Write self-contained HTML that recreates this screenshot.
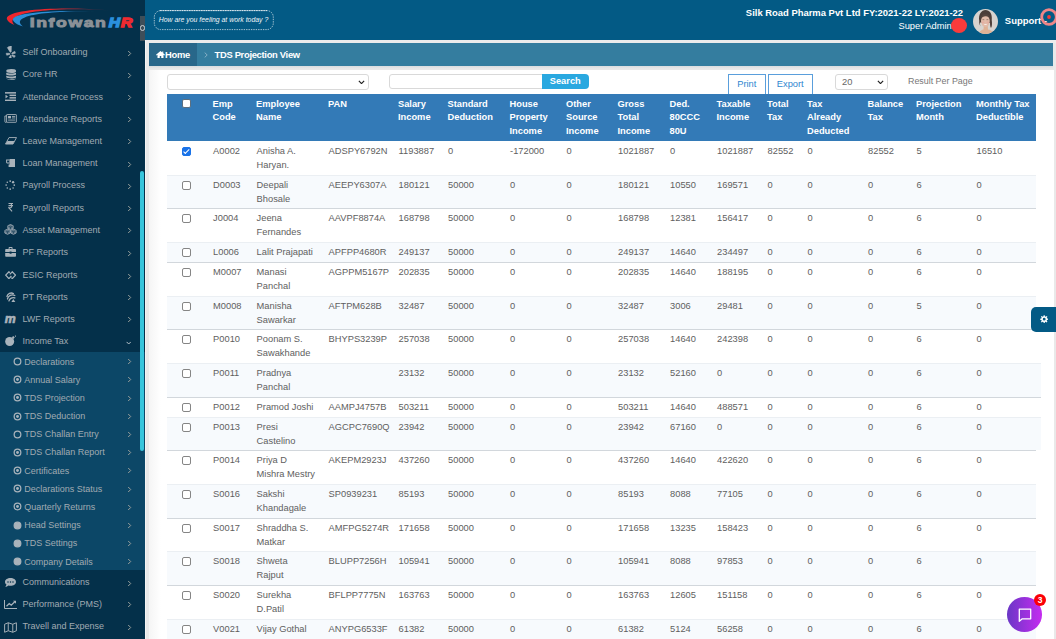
<!DOCTYPE html>
<html lang="en"><head><meta charset="utf-8"><title>TDS Projection View</title>
<style>
*{box-sizing:border-box;margin:0;padding:0}
html,body{width:1056px;height:639px;overflow:hidden}
body{font-family:"Liberation Sans",sans-serif;background:#e9e9e9;position:relative;font-size:9.3px;color:#555}
#side{position:absolute;left:0;top:0;width:145px;height:639px;background:#04304a;overflow:hidden}
#sub{position:absolute;left:0;top:352px;width:145px;height:218px;background:#0c4767}
#sbar{position:absolute;left:140px;top:171px;width:4px;height:280px;background:#37c5dc;border-radius:2px}
.mt,.st{position:absolute;color:#a1abb2;font-size:9px;line-height:12px;white-space:nowrap}
.mt{left:22.4px}
.st{left:24.2px}
.ch{position:absolute;left:127px;width:5px;height:7px}
.b{position:absolute;left:13px;width:9px;height:9px}
#top{position:absolute;left:145px;top:0;width:911px;height:40px;background:#035a85}
#topline{position:absolute;left:145px;top:40px;width:911px;height:3px;background:#ececec}
#shade{position:absolute;left:145px;top:40px;width:1.2px;height:599px;background:#f4f4f4}
#card{position:absolute;left:149px;top:70px;width:905px;height:569px;background:linear-gradient(90deg,#f5f5f5,#fff 12px)}
#bc{position:absolute;left:149px;top:43px;width:904px;height:23px;background:#347d9f}
#bchome{position:absolute;left:149px;top:43px;width:48px;height:23px;background:#28678a}
.bct{position:absolute;color:#fff;font-weight:bold;font-size:9.4px;letter-spacing:-.3px;line-height:23px;top:43px;white-space:nowrap}
#pill{position:absolute;left:153px;top:10px;width:121px;height:19.5px;color:#f0f4f7;font-style:italic;font-size:6.9px;line-height:19.5px;text-align:center;white-space:nowrap}
#ttl{position:absolute;right:93px;top:6.5px;color:#fff;font-weight:bold;font-size:9.43px;line-height:12px;white-space:nowrap}
#sadm{position:absolute;left:898.5px;top:20px;color:#fff;font-size:9.3px;line-height:12px;white-space:nowrap}
#reddot{position:absolute;left:950.5px;top:18px;width:16px;height:15px;border-radius:50%;background:#fa3b3b}
#av{position:absolute;left:973px;top:9px;width:25px;height:25px}
#supp{position:absolute;left:1004.8px;top:14.7px;color:#fff;font-weight:bold;font-size:9.5px;line-height:12px;white-space:nowrap}
#ring{position:absolute;left:1039px;top:7px;width:20px;height:20px}
.inp{position:absolute;background:#fff;border:1px solid #d9d9d9;border-radius:3px}
.cv{position:absolute;width:7px;height:4.5px}
#sbtn{position:absolute;left:542px;top:74px;width:46.5px;height:15px;background:#29a8e0;color:#fff;font-weight:bold;font-size:9.3px;line-height:15px;text-align:center;border-radius:0 4px 4px 0}
.obtn{position:absolute;top:74px;height:22px;border:1px solid #5a9fdc;background:#fff;color:#2f86cf;font-size:9.3px;line-height:18px;text-align:center}
.thead{position:absolute;background:#337ab7}
.th{position:absolute;top:3.5px;color:#fff;font-size:9.3px;line-height:13.5px;white-space:nowrap;font-weight:bold}
.tr{position:absolute;background:#fff;border-top:1px solid #d2d7dc}
.tr.alt{background:#f7fafd;border-top-color:#ebeff3}
.tr.first{border-top-color:#fff}
.td{position:absolute;top:3.3px;color:#606060;font-size:9.3px;line-height:13.67px;white-space:nowrap}
.cb{position:absolute;width:8.8px;height:8.8px;background:#fff;border:1px solid #858585;border-radius:2px}
.thead .cb{border-color:#5c6f80}
.cb.on{background:#1a73e8;border-color:#1a73e8}
.cb.on:after{content:"";position:absolute;left:2px;top:0.2px;width:2.2px;height:4.6px;border:solid #fff;border-width:0 1.2px 1.2px 0;transform:rotate(45deg)}
#gear{position:absolute;left:1031px;top:307px;width:25px;height:25px;background:#035a85;border-radius:5px 0 0 5px}
#gear svg{position:absolute;left:8.8px;top:7.8px;width:8.4px;height:8.4px}
#chatb{position:absolute;left:1007px;top:597.3px;width:34.7px;height:34.7px;border-radius:50%;background:linear-gradient(90deg,#6a37c6,#c52cf0)}
#chatb svg{position:absolute;left:9.5px;top:9.6px;width:16px;height:16px}
#badge{position:absolute;left:1034px;top:593.5px;width:12.3px;height:12.3px;border-radius:50%;background:#fb0007;color:#fff;font-weight:bold;font-size:8.5px;line-height:12.3px;text-align:center}
#bcsh{position:absolute;left:149px;top:66px;width:904px;height:4px;background:linear-gradient(180deg,#d9dcdf,#e9e9e9 70%)}

</style></head>
<body>
<div id="side">
<div id="sub"></div>
<svg style="position:absolute;left:5.4px;top:45.8px;width:10.4px;height:12.4px" viewBox="0 0 20 24"><g fill="#a9b3bb" stroke="#a9b3bb" stroke-width="1.100" stroke-linejoin="round"><path d="M8.200 0.800C9.500 0.300 11 0 12.300 0.200L12 10.800C11.900 12.300 10.300 12.600 9.600 11.400L4.500 3.200C5.500 2.100 6.800 1.300 8.200 0.800Z"/><path d="M13.800 13.300L18.800 10.200C19.600 11.300 20 12.600 20 14L14.200 15.600C12.900 15.900 12.700 14 13.800 13.300Z"/><path d="M14.300 17.200L19.800 19C19.500 20.400 18.700 21.600 17.700 22.500L13.300 18.800C12.400 17.900 13.200 16.800 14.300 17.200Z"/><path d="M11.800 19.300L12 24C10.500 24.200 9 23.900 7.700 23.300L10 18.800C10.600 17.700 11.800 18.100 11.800 19.300Z"/><path d="M9 16.300L3.300 18C2.600 16.800 2.200 15.400 2.300 14L8.500 14.200C9.900 14.300 10.200 15.900 9 16.300Z"/></g></svg><div class="mt" style="top:46.0px">Self Onboarding</div><svg class="ch" style="top:49.5px" viewBox="0 0 5 7"><path d="M1.200 1L3.700 3.500L1.200 6" fill="none" stroke="#99a09d" stroke-width="1"/></svg>
<svg style="position:absolute;left:5.6px;top:68.7px;width:10.4px;height:11.0px" viewBox="0 0 21 22"><g fill="#a9b3bb"><ellipse cx="10.5" cy="4" rx="10" ry="4"/><path d="M.5 7.2c2 2.6 18 2.6 20 0v3.6c-2 3-18 3-20 0z"/><path d="M.5 13c2 2.6 18 2.6 20 0v3.600c-2 3-18 3-20 0z"/><path d="M.5 18.600c2 2.600 18 2.600 20 0v0.500c-2 3.800-18 3.800-20 0z"/></g></svg><div class="mt" style="top:68.2px">Core HR</div><svg class="ch" style="top:71.7px" viewBox="0 0 5 7"><path d="M1.200 1L3.700 3.500L1.200 6" fill="none" stroke="#99a09d" stroke-width="1"/></svg>
<svg style="position:absolute;left:4.9px;top:91.9px;width:11.0px;height:9.2px" viewBox="0 0 22 18"><g fill="#a9b3bb"><rect x="0" y="0" width="22" height="3"/><rect x="9" y="5" width="13" height="3"/><rect x="9" y="10" width="13" height="3"/><rect x="0" y="15" width="22" height="3"/><path d="M1 5.200l5 3.800l-5 3.800z"/></g></svg><div class="mt" style="top:90.5px">Attendance Process</div><svg class="ch" style="top:94.0px" viewBox="0 0 5 7"><path d="M1.200 1L3.700 3.500L1.200 6" fill="none" stroke="#99a09d" stroke-width="1"/></svg>
<svg style="position:absolute;left:3.9px;top:114.3px;width:13.0px;height:8.8px" viewBox="0 0 26 18"><g fill="none" stroke="#a9b3bb" stroke-width="1.800"><rect x="5" y="1" width="20" height="16" rx="1"/><path d="M5 4H1.500v11.500a1.700 1.700 0 0 0 3.500 0"/></g><g fill="#a9b3bb"><rect x="8" y="4" width="6" height="5"/><rect x="16" y="4" width="6.500" height="1.800"/><rect x="16" y="7.200" width="6.500" height="1.800"/><rect x="8" y="11.500" width="14.500" height="1.800"/></g></svg><div class="mt" style="top:112.7px">Attendance Reports</div><svg class="ch" style="top:116.2px" viewBox="0 0 5 7"><path d="M1.200 1L3.700 3.500L1.200 6" fill="none" stroke="#99a09d" stroke-width="1"/></svg>
<svg style="position:absolute;left:5.0px;top:137.1px;width:12.0px;height:7.6px" viewBox="0 0 24 15"><path d="M8 1H23L16 14H1Z" fill="none" stroke="#a9b3bb" stroke-width="1.800" stroke-linejoin="round"/><path d="M5 8H19L16 14H1Z" fill="#a9b3bb"/></svg><div class="mt" style="top:134.9px">Leave Management</div><svg class="ch" style="top:138.4px" viewBox="0 0 5 7"><path d="M1.200 1L3.700 3.500L1.200 6" fill="none" stroke="#99a09d" stroke-width="1"/></svg>
<svg style="position:absolute;left:5.9px;top:159.0px;width:9.6px;height:8.4px" viewBox="0 0 19 17"><g fill="#a9b3bb"><path d="M7 0H19V17H5V11H7Z"/><path d="M0 1H7V9H3C1 9 0 8 0 6Z"/></g><rect x="2" y="3" width="4" height="4" fill="#04304a"/></svg><div class="mt" style="top:157.2px">Loan Management</div><svg class="ch" style="top:160.7px" viewBox="0 0 5 7"><path d="M1.200 1L3.700 3.500L1.200 6" fill="none" stroke="#99a09d" stroke-width="1"/></svg>
<svg style="position:absolute;left:5.4px;top:180.3px;width:10.4px;height:10.2px" viewBox="0 0 20 20"><g fill="#a9b3bb"><circle cx="10" cy="2.200" r="1.800"/><circle cx="15.700" cy="4.300" r="2.300"/><circle cx="18" cy="10" r="1.700"/><circle cx="15.700" cy="15.700" r="1.600"/><circle cx="10" cy="18" r="1.600"/><circle cx="4.300" cy="15.700" r="1.600"/><circle cx="2" cy="10" r="1.600"/><circle cx="4.300" cy="4.300" r="1.600"/></g></svg><div class="mt" style="top:179.4px">Payroll Process</div><svg class="ch" style="top:182.9px" viewBox="0 0 5 7"><path d="M1.200 1L3.700 3.500L1.200 6" fill="none" stroke="#99a09d" stroke-width="1"/></svg>
<svg style="position:absolute;left:7.7px;top:203.3px;width:5.8px;height:8.6px" viewBox="0 0 12 18"><path d="M1 1.200H11M1 5.500H11M1 1.200H4.500C9 1.200 9 9.800 4.500 9.800H1.500L8.500 17.500" fill="none" stroke="#a9b3bb" stroke-width="2.200"/></svg><div class="mt" style="top:201.6px">Payroll Reports</div><svg class="ch" style="top:205.1px" viewBox="0 0 5 7"><path d="M1.200 1L3.700 3.500L1.200 6" fill="none" stroke="#99a09d" stroke-width="1"/></svg>
<svg style="position:absolute;left:4.0px;top:224.4px;width:13.0px;height:10.8px" viewBox="0 0 26 22"><g fill="#a9b3bb" fill-opacity=".55" stroke="#a9b3bb" stroke-width="1.600" stroke-linejoin="round"><path d="M13 1L18.500 3.500V9L13 11.500L7.500 9V3.500Z"/><path d="M7 10.500L12.500 13V18.500L7 21L1.500 18.500V13Z"/><path d="M19 10.500L24.500 13V18.500L19 21L13.500 18.500V13Z"/></g><g fill="none" stroke="#04304a" stroke-width="1"><path d="M8.500 4.300L13 6.300L17.500 4.300M13 6.300V10.500"/><path d="M2.500 13.800L7 15.800L11.500 13.800M7 15.800V20"/><path d="M14.500 13.800L19 15.800L23.500 13.800M19 15.800V20"/></g></svg><div class="mt" style="top:223.8px">Asset Management</div><svg class="ch" style="top:227.3px" viewBox="0 0 5 7"><path d="M1.200 1L3.700 3.500L1.200 6" fill="none" stroke="#99a09d" stroke-width="1"/></svg>
<svg style="position:absolute;left:5.0px;top:247.2px;width:11.2px;height:9.8px" viewBox="0 0 22 20"><g fill="#a9b3bb"><path d="M7 4V1.500C7 .6 7.600 0 8.500 0h5c.9 0 1.500.6 1.500 1.500V4h-2V2H9v2z"/><path d="M1.500 4h19c.8 0 1.500.7 1.500 1.500V10H13V9H9v1H0V5.500C0 4.700.7 4 1.500 4z"/><path d="M0 12h9v2h4v-2h9v6.500c0 .8-.7 1.500-1.500 1.500h-19C.7 20 0 19.300 0 18.500z"/></g></svg><div class="mt" style="top:246.1px">PF Reports</div><svg class="ch" style="top:249.6px" viewBox="0 0 5 7"><path d="M1.200 1L3.700 3.500L1.200 6" fill="none" stroke="#99a09d" stroke-width="1"/></svg>
<svg style="position:absolute;left:5.0px;top:270.9px;width:11.2px;height:8.4px" viewBox="0 0 22 16"><g fill="none" stroke="#a9b3bb" stroke-width="2.400" stroke-linejoin="miter" stroke-linecap="butt"><path d="M9.500 3.200L7.700 1.300L1.400 8L7.700 14.700L12.600 9.500"/><path d="M12.500 12.800L14.300 14.700L20.600 8L14.300 1.300L9.400 6.500"/></g></svg><div class="mt" style="top:269.1px">ESIC Reports</div><svg class="ch" style="top:272.6px" viewBox="0 0 5 7"><path d="M1.200 1L3.700 3.500L1.200 6" fill="none" stroke="#99a09d" stroke-width="1"/></svg>
<svg style="position:absolute;left:6.0px;top:291.5px;width:9.8px;height:10.0px" viewBox="0 0 20 20"><g fill="none" stroke="#a9b3bb" stroke-width="2.700" stroke-linecap="round"><path d="M2 9A9 9 0 0 1 15 3"/><path d="M3 14A10 10 0 0 1 18 7"/><path d="M6 18A9 9 0 0 1 18 12"/></g><path d="M11 20L15 14L19 20Z" fill="#a9b3bb"/></svg><div class="mt" style="top:290.5px">PT Reports</div><svg class="ch" style="top:294.0px" viewBox="0 0 5 7"><path d="M1.200 1L3.700 3.500L1.200 6" fill="none" stroke="#99a09d" stroke-width="1"/></svg>
<svg style="position:absolute;left:4px;top:315.4px;width:13px;height:9px" viewBox="0 0 13 9"><text x="0.800" y="8.300" font-family="Liberation Sans, sans-serif" font-weight="bold" font-style="italic" font-size="13.500" fill="#a9b3bb" stroke="#a9b3bb" stroke-width=".7" textLength="11" lengthAdjust="spacingAndGlyphs">m</text></svg><div class="mt" style="top:312.8px">LWF Reports</div><svg class="ch" style="top:316.3px" viewBox="0 0 5 7"><path d="M1.200 1L3.700 3.500L1.200 6" fill="none" stroke="#99a09d" stroke-width="1"/></svg>
<svg style="position:absolute;left:4.8px;top:335.4px;width:11.5px;height:11.2px" viewBox="0 0 23 22"><g fill="#a9b3bb"><circle cx="9.300" cy="12.800" r="9"/><path d="M13.500 4.200L16.500 1.700L19.500 4.700L17 7.700Z"/><circle cx="21" cy="2" r="1.400"/></g></svg><div class="mt" style="top:335.0px">Income Tax</div><svg class="ch" style="left:125.500px;top:340.5px;width:5.400px;height:4px" viewBox="0 0 5.400 4"><path d="M.6 .9L2.700 3L4.800 .9" fill="none" stroke="#b9c4cb" stroke-width="1"/></svg>
<svg class="b" style="top:357.0px" viewBox="0 0 10 10"><circle cx="5" cy="5" r="3.700" fill="none" stroke="#a9b3bb" stroke-width="1.400"/></svg><div class="st" style="top:355.5px">Declarations</div><svg class="ch" style="top:358.2px" viewBox="0 0 5 7"><path d="M1.200 1L3.700 3.500L1.200 6" fill="none" stroke="#99a09d" stroke-width="1"/></svg>
<svg class="b" style="top:375.2px" viewBox="0 0 10 10"><circle cx="5" cy="5" r="3.700" fill="none" stroke="#a9b3bb" stroke-width="1.400"/><circle cx="5" cy="5" r="1.600" fill="#a9b3bb"/></svg><div class="st" style="top:373.7px">Annual Salary</div><svg class="ch" style="top:376.4px" viewBox="0 0 5 7"><path d="M1.200 1L3.700 3.500L1.200 6" fill="none" stroke="#99a09d" stroke-width="1"/></svg>
<svg class="b" style="top:393.4px" viewBox="0 0 10 10"><circle cx="5" cy="5" r="3.700" fill="none" stroke="#a9b3bb" stroke-width="1.400"/><circle cx="5" cy="5" r="1.600" fill="#a9b3bb"/></svg><div class="st" style="top:391.9px">TDS Projection</div><svg class="ch" style="top:394.6px" viewBox="0 0 5 7"><path d="M1.200 1L3.700 3.500L1.200 6" fill="none" stroke="#99a09d" stroke-width="1"/></svg>
<svg class="b" style="top:411.5px" viewBox="0 0 10 10"><circle cx="5" cy="5" r="3.700" fill="none" stroke="#a9b3bb" stroke-width="1.400"/><circle cx="5" cy="5" r="1.600" fill="#a9b3bb"/></svg><div class="st" style="top:410.0px">TDS Deduction</div><svg class="ch" style="top:412.7px" viewBox="0 0 5 7"><path d="M1.200 1L3.700 3.500L1.200 6" fill="none" stroke="#99a09d" stroke-width="1"/></svg>
<svg class="b" style="top:429.7px" viewBox="0 0 10 10"><circle cx="5" cy="5" r="3.700" fill="none" stroke="#a9b3bb" stroke-width="1.400"/></svg><div class="st" style="top:428.2px">TDS Challan Entry</div><svg class="ch" style="top:430.9px" viewBox="0 0 5 7"><path d="M1.200 1L3.700 3.500L1.200 6" fill="none" stroke="#99a09d" stroke-width="1"/></svg>
<svg class="b" style="top:447.9px" viewBox="0 0 10 10"><circle cx="5" cy="5" r="3.700" fill="none" stroke="#a9b3bb" stroke-width="1.400"/><circle cx="5" cy="5" r="1.600" fill="#a9b3bb"/></svg><div class="st" style="top:446.4px">TDS Challan Report</div><svg class="ch" style="top:449.1px" viewBox="0 0 5 7"><path d="M1.200 1L3.700 3.500L1.200 6" fill="none" stroke="#99a09d" stroke-width="1"/></svg>
<svg class="b" style="top:466.1px" viewBox="0 0 10 10"><circle cx="5" cy="5" r="3.700" fill="none" stroke="#a9b3bb" stroke-width="1.400"/><circle cx="5" cy="5" r="1.600" fill="#a9b3bb"/></svg><div class="st" style="top:464.6px">Certificates</div><svg class="ch" style="top:467.3px" viewBox="0 0 5 7"><path d="M1.200 1L3.700 3.500L1.200 6" fill="none" stroke="#99a09d" stroke-width="1"/></svg>
<svg class="b" style="top:484.3px" viewBox="0 0 10 10"><circle cx="5" cy="5" r="3.700" fill="none" stroke="#a9b3bb" stroke-width="1.400"/><circle cx="5" cy="5" r="1.600" fill="#a9b3bb"/></svg><div class="st" style="top:482.8px">Declarations Status</div><svg class="ch" style="top:485.5px" viewBox="0 0 5 7"><path d="M1.200 1L3.700 3.500L1.200 6" fill="none" stroke="#99a09d" stroke-width="1"/></svg>
<svg class="b" style="top:502.4px" viewBox="0 0 10 10"><circle cx="5" cy="5" r="3.700" fill="none" stroke="#a9b3bb" stroke-width="1.400"/><circle cx="5" cy="5" r="1.600" fill="#a9b3bb"/></svg><div class="st" style="top:500.9px">Quarterly Returns</div><svg class="ch" style="top:503.6px" viewBox="0 0 5 7"><path d="M1.200 1L3.700 3.500L1.200 6" fill="none" stroke="#99a09d" stroke-width="1"/></svg>
<svg class="b" style="top:520.6px" viewBox="0 0 10 10"><circle cx="5" cy="5" r="3.700" fill="none" stroke="#a9b3bb" stroke-width="1.400"/><circle cx="5" cy="5" r="3.700" fill="#a9b3bb"/></svg><div class="st" style="top:519.1px">Head Settings</div><svg class="ch" style="top:521.8px" viewBox="0 0 5 7"><path d="M1.200 1L3.700 3.500L1.200 6" fill="none" stroke="#99a09d" stroke-width="1"/></svg>
<svg class="b" style="top:538.8px" viewBox="0 0 10 10"><circle cx="5" cy="5" r="3.700" fill="none" stroke="#a9b3bb" stroke-width="1.400"/><circle cx="5" cy="5" r="3.700" fill="#a9b3bb"/></svg><div class="st" style="top:537.3px">TDS Settings</div><svg class="ch" style="top:540.0px" viewBox="0 0 5 7"><path d="M1.200 1L3.700 3.500L1.200 6" fill="none" stroke="#99a09d" stroke-width="1"/></svg>
<svg class="b" style="top:557.0px" viewBox="0 0 10 10"><circle cx="5" cy="5" r="3.700" fill="none" stroke="#a9b3bb" stroke-width="1.400"/><circle cx="5" cy="5" r="3.700" fill="#a9b3bb"/></svg><div class="st" style="top:555.5px">Company Details</div><svg class="ch" style="top:558.2px" viewBox="0 0 5 7"><path d="M1.200 1L3.700 3.500L1.200 6" fill="none" stroke="#99a09d" stroke-width="1"/></svg>
<svg style="position:absolute;left:5.0px;top:578.4px;width:11.0px;height:9.2px" viewBox="0 0 22 18"><path d="M11 0C4.900 0 0 3.400 0 7.600c0 2 1.100 3.800 2.900 5.100C2.600 14.500 1.500 16.200.5 17.500c2.500 0 4.600-1 6.200-2.700 1.300.3 2.800.5 4.300.5 6.100 0 11-3.400 11-7.700S17.100 0 11 0z" fill="#a9b3bb"/><g fill="#04304a"><circle cx="6" cy="7.700" r="1.500"/><circle cx="11" cy="7.700" r="1.500"/><circle cx="16" cy="7.700" r="1.500"/></g></svg><div class="mt" style="top:576.0px">Communications</div><svg class="ch" style="top:579.5px" viewBox="0 0 5 7"><path d="M1.200 1L3.700 3.500L1.200 6" fill="none" stroke="#99a09d" stroke-width="1"/></svg>
<svg style="position:absolute;left:4.0px;top:600.2px;width:13.0px;height:9.0px" viewBox="0 0 26 18"><g fill="none" stroke="#a9b3bb" stroke-width="2"><path d="M1 0V17H26"/><path d="M5 12.500L10.500 7L14.500 10.500L22 3" stroke-width="2.400"/></g><path d="M18 1.500H24V7.500Z" fill="#a9b3bb"/></svg><div class="mt" style="top:597.7px">Performance (PMS)</div><svg class="ch" style="top:601.2px" viewBox="0 0 5 7"><path d="M1.200 1L3.700 3.500L1.200 6" fill="none" stroke="#99a09d" stroke-width="1"/></svg>
<svg style="position:absolute;left:4.0px;top:621.9px;width:13.0px;height:11.0px" viewBox="0 0 26 22"><path d="M1.200 4.500L8.500 1.500L17.500 4.500L24.800 1.500V17.500L17.500 20.500L8.500 17.500L1.200 20.500ZM8.500 1.500V17.500M17.500 4.500V20.500" fill="none" stroke="#a9b3bb" stroke-width="1.900" stroke-linejoin="round"/></svg><div class="mt" style="top:620.4px">Travell and Expense</div><svg class="ch" style="top:623.9px" viewBox="0 0 5 7"><path d="M1.200 1L3.700 3.500L1.200 6" fill="none" stroke="#99a09d" stroke-width="1"/></svg>
<div id="sbar"></div>
<svg style="position:absolute;left:0;top:0;width:145px;height:40px" viewBox="0 0 145 40">
<defs><linearGradient id="gr" x1="0" x2="1" y1="0" y2="0"><stop offset="0" stop-color="#f0262d"/><stop offset=".55" stop-color="#e4262d"/><stop offset="1" stop-color="#e4262d" stop-opacity="0"/></linearGradient>
<linearGradient id="gb" x1="0" x2="1" y1="0" y2="0"><stop offset="0" stop-color="#2b8fd8"/><stop offset=".6" stop-color="#2b8fd8"/><stop offset="1" stop-color="#2b8fd8" stop-opacity="0"/></linearGradient></defs>
<path d="M110 10.400C66 6.400 8.500 8.700 6.800 18.300C7 21.300 10.500 23.600 15 25C10.500 21.500 6.500 12 60 9.400C80 8.800 98 9.600 110 10.400Z" fill="url(#gr)"/>
<path d="M96 11.400C62 10 14.500 11.700 12.800 19.300C13.200 22.600 17.500 25 24 26.800C17.500 23 13 14.500 60 11.900C74 11.400 86 11.300 96 11.400Z" fill="url(#gb)"/>
<g transform="translate(29.800 26.500) scale(1.300 1)"><text x="0" y="0" font-family="Liberation Sans, sans-serif" font-weight="bold" font-size="13.600" fill="#8b9197" stroke="#8b9197" stroke-width=".9" letter-spacing="1.200">Infowan</text></g>
<g transform="translate(108.800 26.500) scale(1.150 1)"><text x="0" y="0" font-family="Liberation Sans, sans-serif" font-weight="bold" font-style="italic" font-size="13.600" fill="#2a8fdc" stroke="#2a8fdc" stroke-width="1.400">H</text><text x="10.600" y="0" font-family="Liberation Sans, sans-serif" font-weight="bold" font-style="italic" font-size="13.600" fill="#ee2a30" stroke="#ee2a30" stroke-width="1.400">R</text></g>
</svg>
<div style="position:absolute;left:140px;top:16px;width:5px;height:24.500px;background:#3e4e59"></div>
<div style="position:absolute;left:139.500px;top:24.800px;width:5px;height:5.800px;border:1px solid #c9d0d5;border-radius:2.500px"></div>
</div>
<div id="top"></div>
<div id="topline"></div>
<div id="shade"></div>
<div id="card"></div>
<div id="bcsh"></div><div id="bc"></div><div id="bchome"></div>
<svg style="position:absolute;left:152px;top:9px;width:124px;height:22px" viewBox="0 0 124 22"><rect x="2.300" y="1.600" width="119" height="19" rx="6.500" fill="none" stroke="#dbe5eb" stroke-width=".75" stroke-dasharray="1.400 1"/><path d="M8 1.600H116" stroke="#f2f6f8" stroke-width=".9" stroke-dasharray="1.400 1" fill="none"/></svg><div id="pill">How are you feeling at work today ?</div>
<div id="ttl">Silk Road Pharma Pvt Ltd FY:2021-22 LY:2021-22</div>
<div id="sadm">Super Admin</div>
<div id="reddot"></div>
<svg id="av" viewBox="0 0 50 50"><defs><clipPath id="avc"><circle cx="25" cy="25" r="25"/></clipPath><filter id="avb" x="-10%" y="-10%" width="120%" height="120%"><feGaussianBlur stdDeviation="1"/></filter></defs><g clip-path="url(#avc)"><rect width="50" height="50" fill="#d7d3cf"/><g filter="url(#avb)"><path d="M12.500 24C10.500 10 17 2 25 2C33 2 39 9 37.500 22C38.500 30 38 35 36 38C34.500 36 34 32 34 28L14 27C13.500 30 14.500 33 15.500 35C13 32 12 28 12.500 24Z" fill="#4b3e39"/><path d="M11 50C13 43.500 18 41.500 21 41L21.500 34H29.500L30 41C34 41.500 40 43.500 42 50Z" fill="#e0b295"/><ellipse cx="24.800" cy="24" rx="8.800" ry="11.800" fill="#e2bba9"/><path d="M15.500 20C16 12 20.500 9.500 25.500 10C31 10.500 34.500 14 34.500 21C32 16.500 29 14 25 14.500C21 15 18 16.500 15.500 20Z" fill="#54443d"/><ellipse cx="20.300" cy="27" rx="2.600" ry="2" fill="#e5a79c" opacity=".7"/><ellipse cx="29.500" cy="27" rx="2.600" ry="2" fill="#e5a79c" opacity=".7"/><path d="M20.800 29.300C23 32 27 32 29 29.300C26.500 30.300 23.300 30.300 20.800 29.300Z" fill="#fff"/><path d="M19 21.300H22.500M27 21.300H30.500" stroke="#6b5248" stroke-width="1.200"/></g></g></svg>
<div id="supp">Support -</div>
<svg id="ring" viewBox="0 0 20 20"><circle cx="10" cy="10" r="7.300" fill="none" stroke="#ef8587" stroke-width="2.800"/><circle cx="10" cy="10" r="1.900" fill="#f23c3c"/></svg>
<svg style="position:absolute;left:156px;top:50.500px;width:9px;height:7.500px" viewBox="0 0 18 15"><path d="M9 0L0 7.500L1.200 9L3 7.500V15H7.500V10H10.500V15H15V7.500L16.800 9L18 7.500L14.500 4.500V1H12.500V2.900Z" fill="#fff"/></svg>
<div class="bct" style="left:165px">Home</div>
<svg style="position:absolute;left:204px;top:51.500px;width:4px;height:6px" viewBox="0 0 4 6"><path d="M.7 .6L3.200 3L.7 5.400" fill="none" stroke="#8fb6ca" stroke-width=".9"/></svg>
<div class="bct" style="left:214.500px">TDS Projection View</div>
<div class="inp" style="left:167px;top:74px;width:201.500px;height:15.500px"></div>
<svg class="cv" style="left:357.500px;top:79.500px" viewBox="0 0 8 5"><path d="M1 1L4 4L7 1" fill="none" stroke="#222" stroke-width="1.400"/></svg>
<div class="inp" style="left:389px;top:74px;width:155px;height:15px;border-radius:3px 0 0 3px"></div>
<div id="sbtn">Search</div>
<div class="obtn" style="left:728px;width:37.500px">Print</div>
<div class="obtn" style="left:767.500px;width:45.500px">Export</div>
<div class="inp" style="left:834.500px;top:74px;width:53px;height:15.500px"></div>
<div style="position:absolute;left:842px;top:74.600px;line-height:15.500px;font-size:9.300px;color:#666">20</div>
<svg class="cv" style="left:876.500px;top:79.500px" viewBox="0 0 8 5"><path d="M1 1L4 4L7 1" fill="none" stroke="#222" stroke-width="1.400"/></svg>
<div style="position:absolute;left:908px;top:74.600px;line-height:13px;font-size:8.900px;color:#777;white-space:nowrap">Result Per Page</div>
<div class="thead" style="left:167px;top:94px;width:869px;height:47px">
<span class="cb" style="left:15.0px;top:5px"></span>
<div class="th" style="left:45.5px">Emp<br>Code</div>
<div class="th" style="left:89.0px">Employee<br>Name</div>
<div class="th" style="left:161.0px">PAN</div>
<div class="th" style="left:231.0px">Salary<br>Income</div>
<div class="th" style="left:280.5px">Standard<br>Deduction</div>
<div class="th" style="left:342.5px">House<br>Property<br>Income</div>
<div class="th" style="left:399.0px">Other<br>Source<br>Income</div>
<div class="th" style="left:450.5px">Gross<br>Total<br>Income</div>
<div class="th" style="left:502.5px">Ded.<br>80CCC<br>80U</div>
<div class="th" style="left:549.5px">Taxable<br>Income</div>
<div class="th" style="left:600.0px">Total<br>Tax</div>
<div class="th" style="left:640.0px">Tax<br>Already<br>Deducted</div>
<div class="th" style="left:700.5px">Balance<br>Tax</div>
<div class="th" style="left:749.0px">Projection<br>Month</div>
<div class="th" style="left:809.0px">Monthly Tax<br>Deductible</div>
</div>
<div class="tr first" style="left:167px;top:141px;width:869px;height:34px">
<span class="cb on" style="left:15.0px;top:5px"></span><div class="td" style="left:46.1px">A0002</div><div class="td" style="left:89.6px">Anisha A.<br>Haryan.</div><div class="td" style="left:161.6px">ADSPY6792N</div><div class="td" style="left:231.6px">1193887</div><div class="td" style="left:281.1px">0</div><div class="td" style="left:343.1px">-172000</div><div class="td" style="left:399.6px">0</div><div class="td" style="left:451.1px">1021887</div><div class="td" style="left:503.1px">0</div><div class="td" style="left:550.1px">1021887</div><div class="td" style="left:600.6px">82552</div><div class="td" style="left:640.6px">0</div><div class="td" style="left:701.1px">82552</div><div class="td" style="left:749.6px">5</div><div class="td" style="left:809.6px">16510</div>
</div>
<div class="tr alt" style="left:167px;top:175px;width:869px;height:33px">
<span class="cb" style="left:15.0px;top:5px"></span><div class="td" style="left:46.1px">D0003</div><div class="td" style="left:89.6px">Deepali<br>Bhosale</div><div class="td" style="left:161.6px">AEEPY6307A</div><div class="td" style="left:231.6px">180121</div><div class="td" style="left:281.1px">50000</div><div class="td" style="left:343.1px">0</div><div class="td" style="left:399.6px">0</div><div class="td" style="left:451.1px">180121</div><div class="td" style="left:503.1px">10550</div><div class="td" style="left:550.1px">169571</div><div class="td" style="left:600.6px">0</div><div class="td" style="left:640.6px">0</div><div class="td" style="left:701.1px">0</div><div class="td" style="left:749.6px">6</div><div class="td" style="left:809.6px">0</div>
</div>
<div class="tr" style="left:167px;top:208px;width:869px;height:34px">
<span class="cb" style="left:15.0px;top:5px"></span><div class="td" style="left:46.1px">J0004</div><div class="td" style="left:89.6px">Jeena<br>Fernandes</div><div class="td" style="left:161.6px">AAVPF8874A</div><div class="td" style="left:231.6px">168798</div><div class="td" style="left:281.1px">50000</div><div class="td" style="left:343.1px">0</div><div class="td" style="left:399.6px">0</div><div class="td" style="left:451.1px">168798</div><div class="td" style="left:503.1px">12381</div><div class="td" style="left:550.1px">156417</div><div class="td" style="left:600.6px">0</div><div class="td" style="left:640.6px">0</div><div class="td" style="left:701.1px">0</div><div class="td" style="left:749.6px">6</div><div class="td" style="left:809.6px">0</div>
</div>
<div class="tr alt" style="left:167px;top:242px;width:869px;height:20px">
<span class="cb" style="left:15.0px;top:5px"></span><div class="td" style="left:46.1px">L0006</div><div class="td" style="left:89.6px">Lalit Prajapati</div><div class="td" style="left:161.6px">APFPP4680R</div><div class="td" style="left:231.6px">249137</div><div class="td" style="left:281.1px">50000</div><div class="td" style="left:343.1px">0</div><div class="td" style="left:399.6px">0</div><div class="td" style="left:451.1px">249137</div><div class="td" style="left:503.1px">14640</div><div class="td" style="left:550.1px">234497</div><div class="td" style="left:600.6px">0</div><div class="td" style="left:640.6px">0</div><div class="td" style="left:701.1px">0</div><div class="td" style="left:749.6px">6</div><div class="td" style="left:809.6px">0</div>
</div>
<div class="tr" style="left:167px;top:262px;width:869px;height:34px">
<span class="cb" style="left:15.0px;top:5px"></span><div class="td" style="left:46.1px">M0007</div><div class="td" style="left:89.6px">Manasi<br>Panchal</div><div class="td" style="left:161.6px">AGPPM5167P</div><div class="td" style="left:231.6px">202835</div><div class="td" style="left:281.1px">50000</div><div class="td" style="left:343.1px">0</div><div class="td" style="left:399.6px">0</div><div class="td" style="left:451.1px">202835</div><div class="td" style="left:503.1px">14640</div><div class="td" style="left:550.1px">188195</div><div class="td" style="left:600.6px">0</div><div class="td" style="left:640.6px">0</div><div class="td" style="left:701.1px">0</div><div class="td" style="left:749.6px">6</div><div class="td" style="left:809.6px">0</div>
</div>
<div class="tr alt" style="left:167px;top:296px;width:869px;height:33px">
<span class="cb" style="left:15.0px;top:5px"></span><div class="td" style="left:46.1px">M0008</div><div class="td" style="left:89.6px">Manisha<br>Sawarkar</div><div class="td" style="left:161.6px">AFTPM628B</div><div class="td" style="left:231.6px">32487</div><div class="td" style="left:281.1px">50000</div><div class="td" style="left:343.1px">0</div><div class="td" style="left:399.6px">0</div><div class="td" style="left:451.1px">32487</div><div class="td" style="left:503.1px">3006</div><div class="td" style="left:550.1px">29481</div><div class="td" style="left:600.6px">0</div><div class="td" style="left:640.6px">0</div><div class="td" style="left:701.1px">0</div><div class="td" style="left:749.6px">5</div><div class="td" style="left:809.6px">0</div>
</div>
<div class="tr" style="left:167px;top:329px;width:869px;height:34px">
<span class="cb" style="left:15.0px;top:5px"></span><div class="td" style="left:46.1px">P0010</div><div class="td" style="left:89.6px">Poonam S.<br>Sawakhande</div><div class="td" style="left:161.6px">BHYPS3239P</div><div class="td" style="left:231.6px">257038</div><div class="td" style="left:281.1px">50000</div><div class="td" style="left:343.1px">0</div><div class="td" style="left:399.6px">0</div><div class="td" style="left:451.1px">257038</div><div class="td" style="left:503.1px">14640</div><div class="td" style="left:550.1px">242398</div><div class="td" style="left:600.6px">0</div><div class="td" style="left:640.6px">0</div><div class="td" style="left:701.1px">0</div><div class="td" style="left:749.6px">6</div><div class="td" style="left:809.6px">0</div>
</div>
<div class="tr alt" style="left:167px;top:363px;width:874px;height:34px">
<span class="cb" style="left:15.0px;top:5px"></span><div class="td" style="left:46.1px">P0011</div><div class="td" style="left:89.6px">Pradnya<br>Panchal</div><div class="td" style="left:231.6px">23132</div><div class="td" style="left:281.1px">50000</div><div class="td" style="left:343.1px">0</div><div class="td" style="left:399.6px">0</div><div class="td" style="left:451.1px">23132</div><div class="td" style="left:503.1px">52160</div><div class="td" style="left:550.1px">0</div><div class="td" style="left:600.6px">0</div><div class="td" style="left:640.6px">0</div><div class="td" style="left:701.1px">0</div><div class="td" style="left:749.6px">6</div><div class="td" style="left:809.6px">0</div>
</div>
<div class="tr" style="left:167px;top:397px;width:874px;height:20px">
<span class="cb" style="left:15.0px;top:5px"></span><div class="td" style="left:46.1px">P0012</div><div class="td" style="left:89.6px">Pramod Joshi</div><div class="td" style="left:161.6px">AAMPJ4757B</div><div class="td" style="left:231.6px">503211</div><div class="td" style="left:281.1px">50000</div><div class="td" style="left:343.1px">0</div><div class="td" style="left:399.6px">0</div><div class="td" style="left:451.1px">503211</div><div class="td" style="left:503.1px">14640</div><div class="td" style="left:550.1px">488571</div><div class="td" style="left:600.6px">0</div><div class="td" style="left:640.6px">0</div><div class="td" style="left:701.1px">0</div><div class="td" style="left:749.6px">6</div><div class="td" style="left:809.6px">0</div>
</div>
<div class="tr alt" style="left:167px;top:417px;width:874px;height:33px">
<span class="cb" style="left:15.0px;top:5px"></span><div class="td" style="left:46.1px">P0013</div><div class="td" style="left:89.6px">Presi<br>Castelino</div><div class="td" style="left:161.6px">AGCPC7690Q</div><div class="td" style="left:231.6px">23942</div><div class="td" style="left:281.1px">50000</div><div class="td" style="left:343.1px">0</div><div class="td" style="left:399.6px">0</div><div class="td" style="left:451.1px">23942</div><div class="td" style="left:503.1px">67160</div><div class="td" style="left:550.1px">0</div><div class="td" style="left:600.6px">0</div><div class="td" style="left:640.6px">0</div><div class="td" style="left:701.1px">0</div><div class="td" style="left:749.6px">6</div><div class="td" style="left:809.6px">0</div>
</div>
<div class="tr" style="left:167px;top:450px;width:869px;height:34px">
<span class="cb" style="left:15.0px;top:5px"></span><div class="td" style="left:46.1px">P0014</div><div class="td" style="left:89.6px">Priya D<br>Mishra Mestry</div><div class="td" style="left:161.6px">AKEPM2923J</div><div class="td" style="left:231.6px">437260</div><div class="td" style="left:281.1px">50000</div><div class="td" style="left:343.1px">0</div><div class="td" style="left:399.6px">0</div><div class="td" style="left:451.1px">437260</div><div class="td" style="left:503.1px">14640</div><div class="td" style="left:550.1px">422620</div><div class="td" style="left:600.6px">0</div><div class="td" style="left:640.6px">0</div><div class="td" style="left:701.1px">0</div><div class="td" style="left:749.6px">6</div><div class="td" style="left:809.6px">0</div>
</div>
<div class="tr alt" style="left:167px;top:484px;width:869px;height:34px">
<span class="cb" style="left:15.0px;top:5px"></span><div class="td" style="left:46.1px">S0016</div><div class="td" style="left:89.6px">Sakshi<br>Khandagale</div><div class="td" style="left:161.6px">SP0939231</div><div class="td" style="left:231.6px">85193</div><div class="td" style="left:281.1px">50000</div><div class="td" style="left:343.1px">0</div><div class="td" style="left:399.6px">0</div><div class="td" style="left:451.1px">85193</div><div class="td" style="left:503.1px">8088</div><div class="td" style="left:550.1px">77105</div><div class="td" style="left:600.6px">0</div><div class="td" style="left:640.6px">0</div><div class="td" style="left:701.1px">0</div><div class="td" style="left:749.6px">6</div><div class="td" style="left:809.6px">0</div>
</div>
<div class="tr" style="left:167px;top:518px;width:869px;height:33px">
<span class="cb" style="left:15.0px;top:5px"></span><div class="td" style="left:46.1px">S0017</div><div class="td" style="left:89.6px">Shraddha S.<br>Matkar</div><div class="td" style="left:161.6px">AMFPG5274R</div><div class="td" style="left:231.6px">171658</div><div class="td" style="left:281.1px">50000</div><div class="td" style="left:343.1px">0</div><div class="td" style="left:399.6px">0</div><div class="td" style="left:451.1px">171658</div><div class="td" style="left:503.1px">13235</div><div class="td" style="left:550.1px">158423</div><div class="td" style="left:600.6px">0</div><div class="td" style="left:640.6px">0</div><div class="td" style="left:701.1px">0</div><div class="td" style="left:749.6px">6</div><div class="td" style="left:809.6px">0</div>
</div>
<div class="tr alt" style="left:167px;top:551px;width:869px;height:34px">
<span class="cb" style="left:15.0px;top:5px"></span><div class="td" style="left:46.1px">S0018</div><div class="td" style="left:89.6px">Shweta<br>Rajput</div><div class="td" style="left:161.6px">BLUPP7256H</div><div class="td" style="left:231.6px">105941</div><div class="td" style="left:281.1px">50000</div><div class="td" style="left:343.1px">0</div><div class="td" style="left:399.6px">0</div><div class="td" style="left:451.1px">105941</div><div class="td" style="left:503.1px">8088</div><div class="td" style="left:550.1px">97853</div><div class="td" style="left:600.6px">0</div><div class="td" style="left:640.6px">0</div><div class="td" style="left:701.1px">0</div><div class="td" style="left:749.6px">6</div><div class="td" style="left:809.6px">0</div>
</div>
<div class="tr" style="left:167px;top:585px;width:869px;height:34px">
<span class="cb" style="left:15.0px;top:5px"></span><div class="td" style="left:46.1px">S0020</div><div class="td" style="left:89.6px">Surekha<br>D.Patil</div><div class="td" style="left:161.6px">BFLPP7775N</div><div class="td" style="left:231.6px">163763</div><div class="td" style="left:281.1px">50000</div><div class="td" style="left:343.1px">0</div><div class="td" style="left:399.6px">0</div><div class="td" style="left:451.1px">163763</div><div class="td" style="left:503.1px">12605</div><div class="td" style="left:550.1px">151158</div><div class="td" style="left:600.6px">0</div><div class="td" style="left:640.6px">0</div><div class="td" style="left:701.1px">0</div><div class="td" style="left:749.6px">6</div><div class="td" style="left:809.6px">0</div>
</div>
<div class="tr alt" style="left:167px;top:619px;width:869px;height:20px">
<span class="cb" style="left:15.0px;top:5px"></span><div class="td" style="left:46.1px">V0021</div><div class="td" style="left:89.6px">Vijay Gothal</div><div class="td" style="left:161.6px">ANYPG6533F</div><div class="td" style="left:231.6px">61382</div><div class="td" style="left:281.1px">50000</div><div class="td" style="left:343.1px">0</div><div class="td" style="left:399.6px">0</div><div class="td" style="left:451.1px">61382</div><div class="td" style="left:503.1px">5124</div><div class="td" style="left:550.1px">56258</div><div class="td" style="left:600.6px">0</div><div class="td" style="left:640.6px">0</div><div class="td" style="left:701.1px">0</div><div class="td" style="left:749.6px">6</div><div class="td" style="left:809.6px">0</div>
</div>
<div id="gear"><svg viewBox="0 0 16 16"><path fill="#fff" fill-rule="evenodd" d="M6.69 2.55L6.96 0.27L9.04 0.27L9.31 2.55L10.93 3.23L12.73 1.80L14.20 3.27L12.77 5.07L13.45 6.69L15.73 6.96L15.73 9.04L13.45 9.31L12.77 10.93L14.20 12.73L12.73 14.20L10.93 12.77L9.31 13.45L9.04 15.73L6.96 15.73L6.69 13.45L5.07 12.77L3.27 14.20L1.80 12.73L3.23 10.93L2.55 9.31L0.27 9.04L0.27 6.96L2.55 6.69L3.23 5.07L1.80 3.27L3.27 1.80L5.07 3.23ZM5.30 8.00a2.70 2.70 0 1 0 5.40 0a2.70 2.70 0 1 0 -5.40 0Z"/></svg></div>
<div id="chatb"><svg viewBox="0 0 16 16"><path d="M2.300 2.200H13.700V11.800H5.300L2.300 14.300Z" fill="none" stroke="#fff" stroke-width="1.300" stroke-linejoin="round"/></svg></div>
<div id="badge">3</div>
</body></html>
